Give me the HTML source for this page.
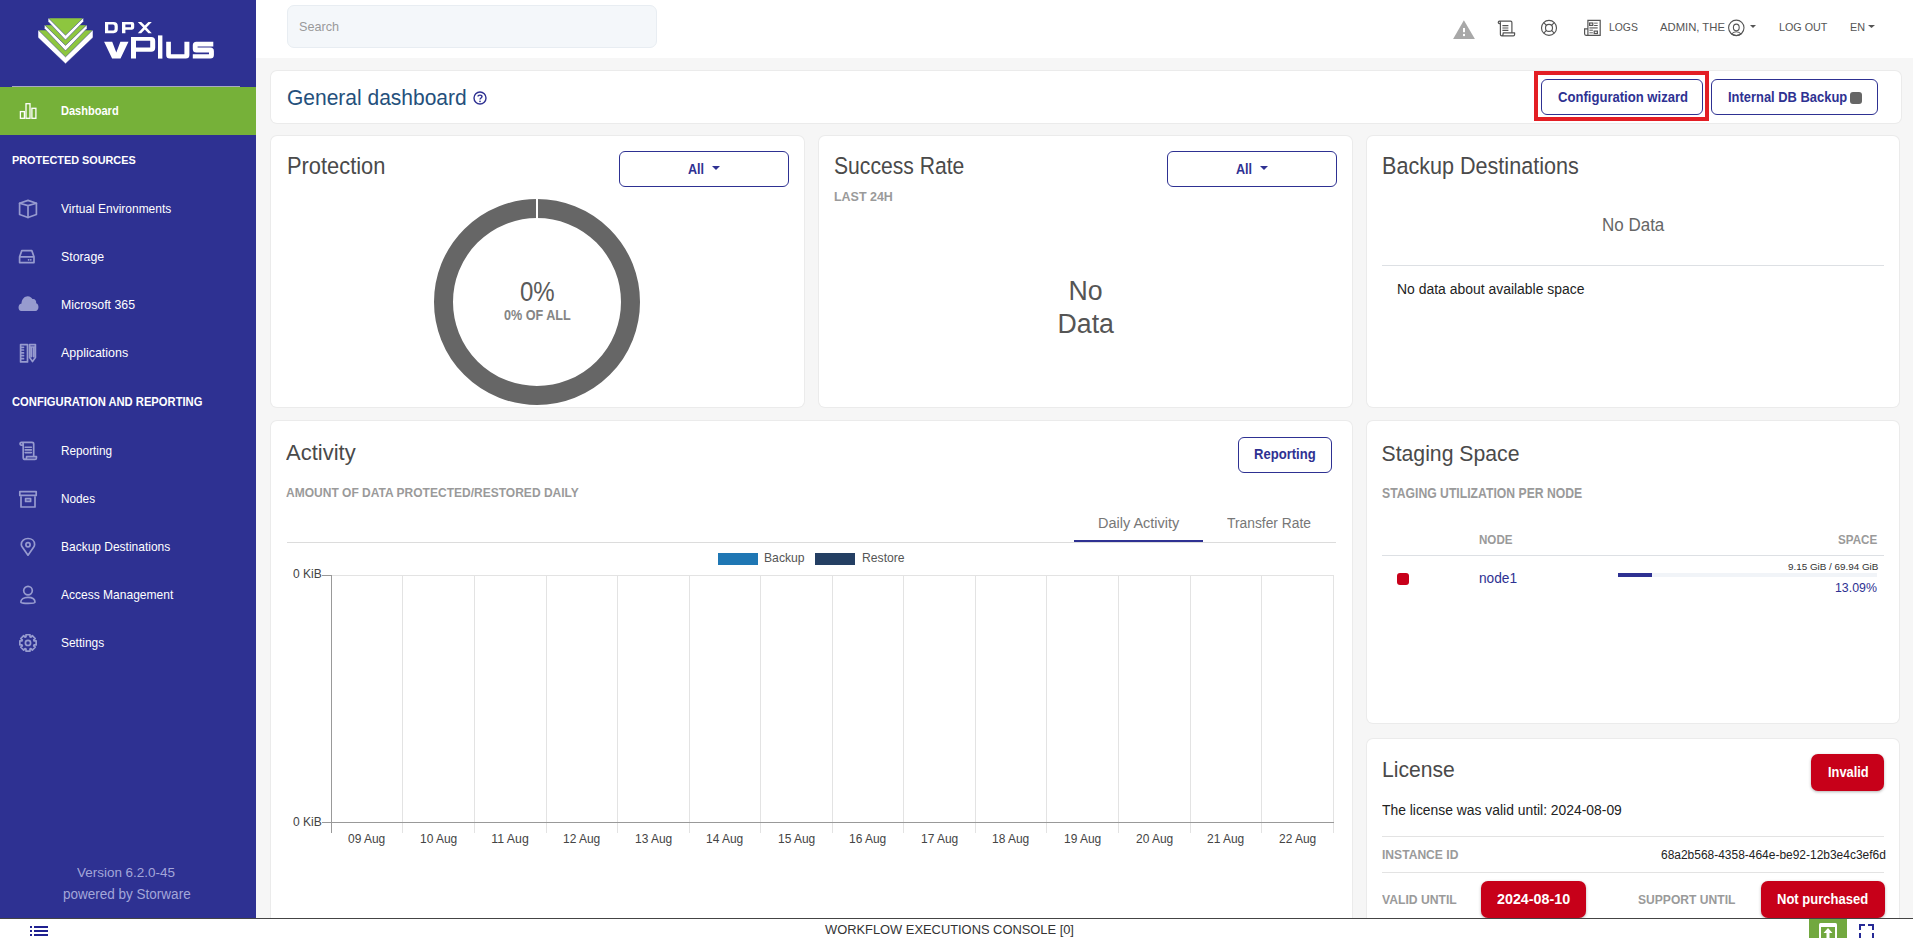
<!DOCTYPE html>
<html><head><meta charset="utf-8"><style>
*{box-sizing:border-box;margin:0;padding:0}
html,body{width:1913px;height:938px;overflow:hidden;background:#f6f6f6;font-family:"Liberation Sans",sans-serif;position:relative}
.a{position:absolute;white-space:nowrap;line-height:1}
</style></head><body>
<div style="position:absolute;left:0px;top:0px;width:256px;height:938px;background:#2e3192"></div>
<div style="position:absolute;left:256px;top:0px;width:1657px;height:58px;background:#fff"></div>
<svg style="position:absolute;left:0px;top:0px" width="256" height="87" viewBox="0 0 256 87">
<g stroke="#2e3192" stroke-width="0.5">
<polygon points="38,30.1 38,37.6 65.5,63.8 93,37.6 93,30.1" fill="#fff"/>
<polygon points="38.3,30.1 92.7,30.1 65.5,56.9" fill="#8dc63f"/>
<polygon points="44.4,24.9 44.4,28.4 65.5,50.8 87,28.4 87,24.9" fill="#fff"/>
<polygon points="44.6,24.9 86.7,24.9 65.5,45.4" fill="#8dc63f"/>
<polygon points="48.1,18 48.1,21.5 65.5,39.9 83.5,21.5 83.5,18" fill="#fff"/>
<polygon points="48.4,18 83.2,18 65.5,35.3" fill="#8dc63f"/>
</g>
<g fill="#fff" fill-rule="evenodd">
<path d="M105,21.9 H113.6 Q117.8,21.9 117.8,26 V29.1 Q117.8,33.2 113.6,33.2 H105 Z M108.2,24.6 V30.5 H113 Q114.6,30.5 114.6,28.9 V26.2 Q114.6,24.6 113,24.6 Z"/>
<path d="M122,21.9 H132 Q134.2,21.9 134.2,24 V27.6 Q134.2,29.7 132,29.7 H125.4 V33.2 H122 Z M125.4,24.4 V27.2 H131 V24.4 Z"/>
<path d="M137.8,21.9 H141.2 L144.8,25.6 L148.4,21.9 H151.8 L146.5,27.55 L151.8,33.2 H148.4 L144.8,29.5 L141.2,33.2 H137.8 L143.1,27.55 Z"/>
<polygon points="104.1,41.7 112.2,41.7 116.3,52.6 120.4,41.7 128.5,41.7 120.5,58.6 112.1,58.6"/>
<path d="M131,37 H151.2 Q155.2,37 155.2,41 V47.7 Q155.2,51.7 151.2,51.7 H136 V58.6 H131 Z M136,40.7 V47.6 H150.2 V40.7 Z"/>
<rect x="158" y="35.4" width="4.4" height="23.2"/>
<path d="M166.2,41.7 H170.9 V54.2 H184.4 V41.7 H189.4 V55 Q189.4,58.6 185.8,58.6 H169.8 Q166.2,58.6 166.2,55 Z"/>
<path d="M196.4,41.7 H213.3 V46.4 H197.6 V47.6 H210.3 Q213.9,47.6 213.9,51.2 V55 Q213.9,58.6 210.3,58.6 H192.8 V54.2 H209 V52.6 H196.4 Q192.8,52.6 192.8,49 V45.3 Q192.8,41.7 196.4,41.7 Z"/>
</g>
</svg>
<div style="position:absolute;left:12px;top:86px;width:228px;height:1px;background:#a9a9c4"></div>
<div style="position:absolute;left:0px;top:87px;width:256px;height:48px;background:#76b139"></div>
<div class="a" style="left:61.0px;top:105.00px;font-size:12.33px;color:#fff;font-weight:bold;transform:scaleX(0.895);transform-origin:0 0;">Dashboard</div>
<div class="a" style="left:12.0px;top:154.00px;font-size:11.78px;color:#fff;font-weight:bold;transform:scaleX(0.923);transform-origin:0 0;">PROTECTED SOURCES</div>
<div class="a" style="left:12.0px;top:396.00px;font-size:12.19px;color:#fff;font-weight:bold;transform:scaleX(0.919);transform-origin:0 0;">CONFIGURATION AND REPORTING</div>
<div class="a" style="left:61.0px;top:203.00px;font-size:12.33px;color:#fff;transform:scaleX(0.971);transform-origin:0 0;">Virtual Environments</div>
<div class="a" style="left:61.0px;top:251.00px;font-size:12.33px;color:#fff;">Storage</div>
<div class="a" style="left:61.0px;top:299.00px;font-size:12.33px;color:#fff;">Microsoft 365</div>
<div class="a" style="left:61.0px;top:347.00px;font-size:12.33px;color:#fff;transform:scaleX(1.010);transform-origin:0 0;">Applications</div>
<div class="a" style="left:61.0px;top:445.00px;font-size:12.33px;color:#fff;transform:scaleX(0.956);transform-origin:0 0;">Reporting</div>
<div class="a" style="left:61.0px;top:493.00px;font-size:12.33px;color:#fff;transform:scaleX(0.956);transform-origin:0 0;">Nodes</div>
<div class="a" style="left:61.0px;top:541.00px;font-size:12.33px;color:#fff;transform:scaleX(0.972);transform-origin:0 0;">Backup Destinations</div>
<div class="a" style="left:61.0px;top:589.00px;font-size:12.33px;color:#fff;transform:scaleX(0.975);transform-origin:0 0;">Access Management</div>
<div class="a" style="left:61.0px;top:637.00px;font-size:12.33px;color:#fff;transform:scaleX(0.968);transform-origin:0 0;">Settings</div>
<div class="a" style="left:77.0px;top:866.00px;font-size:13.01px;color:#a3a6d9;transform:scaleX(1.035);transform-origin:0 0;">Version 6.2.0-45</div>
<div class="a" style="left:62.7px;top:888.00px;font-size:13.97px;color:#a3a6d9;transform:scaleX(0.967);transform-origin:0 0;">powered by Storware</div>
<div style="position:absolute;left:287px;top:5px;width:370px;height:43px;background:#f4f7fa;border:1px solid #e8edf2;border-radius:7px"></div>
<div class="a" style="left:298.5px;top:20.00px;font-size:13.56px;color:#9a9a9a;transform:scaleX(0.933);transform-origin:0 0;">Search</div>
<div class="a" style="left:1608.5px;top:22.00px;font-size:11.51px;color:#555;transform:scaleX(0.904);transform-origin:0 0;">LOGS</div>
<div class="a" style="left:1660.4px;top:22.00px;font-size:11.51px;color:#555;transform:scaleX(0.980);transform-origin:0 0;">ADMIN, THE</div>
<div class="a" style="left:1778.6px;top:22.00px;font-size:11.51px;color:#555;transform:scaleX(0.935);transform-origin:0 0;">LOG OUT</div>
<div class="a" style="left:1849.5px;top:22.00px;font-size:11.51px;color:#555;transform:scaleX(0.939);transform-origin:0 0;">EN</div>
<div style="position:absolute;left:271px;top:71px;width:1630px;height:52px;background:#fff;border-radius:6px;box-shadow:0 0 0 1px #ebebeb"></div>
<div style="position:absolute;left:271px;top:136px;width:533px;height:271px;background:#fff;border-radius:6px;box-shadow:0 0 0 1px #ebebeb"></div>
<div style="position:absolute;left:819px;top:136px;width:533px;height:271px;background:#fff;border-radius:6px;box-shadow:0 0 0 1px #ebebeb"></div>
<div style="position:absolute;left:1367px;top:136px;width:532px;height:271px;background:#fff;border-radius:6px;box-shadow:0 0 0 1px #ebebeb"></div>
<div style="position:absolute;left:271px;top:421px;width:1081px;height:539px;background:#fff;border-radius:6px;box-shadow:0 0 0 1px #ebebeb"></div>
<div style="position:absolute;left:1367px;top:421px;width:532px;height:302px;background:#fff;border-radius:6px;box-shadow:0 0 0 1px #ebebeb"></div>
<div style="position:absolute;left:1367px;top:739px;width:532px;height:221px;background:#fff;border-radius:6px;box-shadow:0 0 0 1px #ebebeb"></div>
<div class="a" style="left:287.0px;top:87.00px;font-size:22.19px;color:#24507c;transform:scaleX(0.946);transform-origin:0 0;">General dashboard</div>
<svg style="position:absolute;left:473px;top:91px" width="14" height="14" viewBox="0 0 14 14"><circle cx="7" cy="7" r="6" fill="none" stroke="#2e3192" stroke-width="1.4"/><path d="M5,5.6 C5,3.6 9,3.6 9,5.6 C9,7 7,7 7,8.6" fill="none" stroke="#2e3192" stroke-width="1.4"/><circle cx="7" cy="10.4" r=".8" fill="#2e3192"/></svg>
<div style="position:absolute;left:1534px;top:71px;width:175px;height:50px;border:4px solid #e31e24"></div>
<div style="position:absolute;left:1541px;top:79px;width:162px;height:36px;border:1px solid #2e3192;border-radius:6px;background:#fff"></div>
<div class="a" style="left:1557.5px;top:90.00px;font-size:14.79px;color:#2e3192;font-weight:bold;transform:scaleX(0.885);transform-origin:0 0;">Configuration wizard</div>
<div style="position:absolute;left:1711px;top:79px;width:167px;height:36px;border:1px solid #2e3192;border-radius:6px;background:#fff"></div>
<div class="a" style="left:1727.5px;top:90.00px;font-size:14.79px;color:#2e3192;font-weight:bold;transform:scaleX(0.874);transform-origin:0 0;">Internal DB Backup</div>
<div style="position:absolute;left:1850px;top:92px;width:12px;height:12px;background:#666;border-radius:3px"></div>
<div class="a" style="left:286.7px;top:155.00px;font-size:23.29px;color:#4a4a4a;transform:scaleX(0.939);transform-origin:0 0;">Protection</div>
<div style="position:absolute;left:619px;top:151px;width:170px;height:36px;border:1px solid #2e3192;border-radius:6px;background:#fff"></div>
<div class="a" style="left:688.0px;top:162.00px;font-size:14.38px;color:#2e3192;font-weight:bold;transform:scaleX(0.876);transform-origin:0 0;">All</div>
<svg style="position:absolute;left:712.0px;top:166px" width="8.0" height="5" viewBox="0 0 8.0 5"><polygon points="0,0 8,0 4,4" fill="#2e3192"/></svg>
<svg style="position:absolute;left:434px;top:199px" width="206" height="206" viewBox="0 0 206 206"><circle cx="103" cy="103" r="93.5" fill="none" stroke="#666" stroke-width="19"/><rect x="102" y="0" width="2" height="21" fill="#fff"/></svg>
<div class="a" style="left:520.0px;top:278.00px;font-size:27.53px;color:#5a5a5a;transform:scaleX(0.873);transform-origin:0 0;">0%</div>
<div class="a" style="left:504.3px;top:308.00px;font-size:14.38px;color:#858585;font-weight:bold;transform:scaleX(0.877);transform-origin:0 0;">0% OF ALL</div>
<div class="a" style="left:834.2px;top:155.00px;font-size:23.29px;color:#4a4a4a;transform:scaleX(0.907);transform-origin:0 0;">Success Rate</div>
<div style="position:absolute;left:1167px;top:151px;width:170px;height:36px;border:1px solid #2e3192;border-radius:6px;background:#fff"></div>
<div class="a" style="left:1236.0px;top:162.00px;font-size:14.38px;color:#2e3192;font-weight:bold;transform:scaleX(0.876);transform-origin:0 0;">All</div>
<svg style="position:absolute;left:1260.0px;top:166px" width="8.0" height="5" viewBox="0 0 8.0 5"><polygon points="0,0 8,0 4,4" fill="#2e3192"/></svg>
<div class="a" style="left:834.2px;top:190.00px;font-size:13.29px;color:#9a9a9a;font-weight:bold;transform:scaleX(0.938);transform-origin:0 0;">LAST 24H</div>
<div class="a" style="left:1068.5px;top:278.00px;font-size:26.71px;color:#555;">No</div>
<div class="a" style="left:1057.5px;top:311.00px;font-size:26.71px;color:#555;">Data</div>
<div class="a" style="left:1382.0px;top:155.00px;font-size:23.29px;color:#4a4a4a;transform:scaleX(0.927);transform-origin:0 0;">Backup Destinations</div>
<div class="a" style="left:1602.0px;top:216.00px;font-size:18.49px;color:#666;transform:scaleX(0.919);transform-origin:0 0;">No Data</div>
<div style="position:absolute;left:1382px;top:265px;width:502px;height:1px;background:#dde0e4"></div>
<div class="a" style="left:1396.8px;top:282.00px;font-size:14.93px;color:#222;transform:scaleX(0.934);transform-origin:0 0;">No data about available space</div>
<div class="a" style="left:286.3px;top:441.00px;font-size:22.88px;color:#4a4a4a;transform:scaleX(0.961);transform-origin:0 0;">Activity</div>
<div class="a" style="left:286.3px;top:486.00px;font-size:13.56px;color:#9a9a9a;font-weight:bold;transform:scaleX(0.887);transform-origin:0 0;">AMOUNT OF DATA PROTECTED/RESTORED DAILY</div>
<div style="position:absolute;left:1238px;top:437px;width:94px;height:36px;border:1px solid #2e3192;border-radius:6px;background:#fff"></div>
<div class="a" style="left:1254.0px;top:446.00px;font-size:15.48px;color:#2e3192;font-weight:bold;transform:scaleX(0.844);transform-origin:0 0;">Reporting</div>
<div class="a" style="left:1098.0px;top:515.00px;font-size:15.07px;color:#777;transform:scaleX(0.962);transform-origin:0 0;">Daily Activity</div>
<div class="a" style="left:1227.3px;top:515.00px;font-size:15.07px;color:#777;transform:scaleX(0.918);transform-origin:0 0;">Transfer Rate</div>
<div style="position:absolute;left:287px;top:542px;width:1049px;height:1px;background:#dcdcdc"></div>
<div style="position:absolute;left:1074px;top:540px;width:129px;height:2px;background:#2e3192"></div>
<div style="position:absolute;left:718px;top:553px;width:40px;height:12px;background:#1f77b4"></div>
<div class="a" style="left:764.0px;top:552.00px;font-size:12.33px;color:#555;transform:scaleX(0.987);transform-origin:0 0;">Backup</div>
<div style="position:absolute;left:815px;top:553px;width:40px;height:12px;background:#243f63"></div>
<div class="a" style="left:861.5px;top:552.00px;font-size:12.33px;color:#555;transform:scaleX(0.987);transform-origin:0 0;">Restore</div>
<svg style="position:absolute;left:320px;top:575px" width="1020" height="260" viewBox="0 0 1020 260"><rect x="11" y="0" width="1003" height="1" fill="#e3e3e3"/><rect x="11" y="0" width="1" height="258" fill="#e3e3e3"/><rect x="82" y="0" width="1" height="258" fill="#e3e3e3"/><rect x="154" y="0" width="1" height="258" fill="#e3e3e3"/><rect x="226" y="0" width="1" height="258" fill="#e3e3e3"/><rect x="297" y="0" width="1" height="258" fill="#e3e3e3"/><rect x="369" y="0" width="1" height="258" fill="#e3e3e3"/><rect x="440" y="0" width="1" height="258" fill="#e3e3e3"/><rect x="512" y="0" width="1" height="258" fill="#e3e3e3"/><rect x="583" y="0" width="1" height="258" fill="#e3e3e3"/><rect x="655" y="0" width="1" height="258" fill="#e3e3e3"/><rect x="726" y="0" width="1" height="258" fill="#e3e3e3"/><rect x="798" y="0" width="1" height="258" fill="#e3e3e3"/><rect x="870" y="0" width="1" height="258" fill="#e3e3e3"/><rect x="941" y="0" width="1" height="258" fill="#e3e3e3"/><rect x="1013" y="0" width="1" height="258" fill="#e3e3e3"/><rect x="11" y="0" width="1" height="258" fill="#999"/><rect x="2" y="247" width="1012" height="1" fill="#999"/><rect x="2" y="0" width="9" height="1" fill="#999"/></svg>
<div class="a" style="left:292.8px;top:568.00px;font-size:12.33px;color:#444;transform:scaleX(0.976);transform-origin:0 0;">0 KiB</div>
<div class="a" style="left:292.8px;top:816.00px;font-size:12.74px;color:#444;transform:scaleX(0.946);transform-origin:0 0;">0 KiB</div>
<div class="a" style="left:348.2px;top:833.00px;font-size:12.33px;color:#444;transform:scaleX(0.971);transform-origin:0 0;">09 Aug</div>
<div class="a" style="left:419.8px;top:833.00px;font-size:12.33px;color:#444;transform:scaleX(0.971);transform-origin:0 0;">10 Aug</div>
<div class="a" style="left:491.3px;top:833.00px;font-size:12.33px;color:#444;">11 Aug</div>
<div class="a" style="left:562.9px;top:833.00px;font-size:12.33px;color:#444;transform:scaleX(0.971);transform-origin:0 0;">12 Aug</div>
<div class="a" style="left:634.5px;top:833.00px;font-size:12.33px;color:#444;transform:scaleX(0.971);transform-origin:0 0;">13 Aug</div>
<div class="a" style="left:706.0px;top:833.00px;font-size:12.33px;color:#444;transform:scaleX(0.971);transform-origin:0 0;">14 Aug</div>
<div class="a" style="left:777.6px;top:833.00px;font-size:12.33px;color:#444;transform:scaleX(0.971);transform-origin:0 0;">15 Aug</div>
<div class="a" style="left:849.2px;top:833.00px;font-size:12.33px;color:#444;transform:scaleX(0.971);transform-origin:0 0;">16 Aug</div>
<div class="a" style="left:920.7px;top:833.00px;font-size:12.33px;color:#444;transform:scaleX(0.971);transform-origin:0 0;">17 Aug</div>
<div class="a" style="left:992.3px;top:833.00px;font-size:12.33px;color:#444;transform:scaleX(0.971);transform-origin:0 0;">18 Aug</div>
<div class="a" style="left:1063.9px;top:833.00px;font-size:12.33px;color:#444;transform:scaleX(0.971);transform-origin:0 0;">19 Aug</div>
<div class="a" style="left:1135.5px;top:833.00px;font-size:12.33px;color:#444;transform:scaleX(0.971);transform-origin:0 0;">20 Aug</div>
<div class="a" style="left:1207.0px;top:833.00px;font-size:12.33px;color:#444;transform:scaleX(0.971);transform-origin:0 0;">21 Aug</div>
<div class="a" style="left:1278.6px;top:833.00px;font-size:12.33px;color:#444;transform:scaleX(0.971);transform-origin:0 0;">22 Aug</div>
<div class="a" style="left:1381.5px;top:443.00px;font-size:21.23px;color:#4a4a4a;">Staging Space</div>
<div class="a" style="left:1381.5px;top:486.00px;font-size:14.38px;color:#9a9a9a;font-weight:bold;transform:scaleX(0.849);transform-origin:0 0;">STAGING UTILIZATION PER NODE</div>
<div class="a" style="left:1478.5px;top:533.00px;font-size:13.29px;color:#9a9a9a;font-weight:bold;transform:scaleX(0.873);transform-origin:0 0;">NODE</div>
<div class="a" style="left:1838.0px;top:533.00px;font-size:13.29px;color:#9a9a9a;font-weight:bold;transform:scaleX(0.876);transform-origin:0 0;">SPACE</div>
<div style="position:absolute;left:1382px;top:555px;width:502px;height:1px;background:#dde0e4"></div>
<div style="position:absolute;left:1397px;top:573px;width:12px;height:12px;background:#c8001a;border-radius:3px"></div>
<div class="a" style="left:1478.5px;top:571.00px;font-size:14.00px;color:#2e3192;transform:scaleX(0.979);transform-origin:0 0;">node1</div>
<div class="a" style="left:1788.0px;top:562.00px;font-size:9.86px;color:#333;">9.15 GiB / 69.94 GiB</div>
<div style="position:absolute;left:1618px;top:573px;width:259px;height:4px;background:#f1f4f8"></div>
<div style="position:absolute;left:1618px;top:573px;width:34px;height:4px;background:#2e3192"></div>
<div class="a" style="left:1835.4px;top:581.00px;font-size:13.70px;color:#2e3192;transform:scaleX(0.902);transform-origin:0 0;">13.09%</div>
<div class="a" style="left:1382.3px;top:759.00px;font-size:22.47px;color:#4a4a4a;transform:scaleX(0.939);transform-origin:0 0;">License</div>
<div style="position:absolute;left:1811px;top:754px;width:73px;height:37px;background:#c70019;border-radius:7px;box-shadow:0 1px 3px rgba(0,0,0,.3)"></div>
<div class="a" style="left:1827.5px;top:764.00px;font-size:15.07px;color:#fff;font-weight:bold;transform:scaleX(0.852);transform-origin:0 0;">Invalid</div>
<div class="a" style="left:1382.3px;top:802.00px;font-size:15.07px;color:#222;transform:scaleX(0.921);transform-origin:0 0;">The license was valid until: 2024-08-09</div>
<div style="position:absolute;left:1382px;top:836px;width:502px;height:1px;background:#e3e3e3"></div>
<div class="a" style="left:1382.0px;top:848.00px;font-size:13.42px;color:#9a9a9a;font-weight:bold;transform:scaleX(0.902);transform-origin:0 0;">INSTANCE ID</div>
<div class="a" style="left:1660.7px;top:848.00px;font-size:13.70px;color:#222;transform:scaleX(0.874);transform-origin:0 0;">68a2b568-4358-464e-be92-12b3e4c3ef6d</div>
<div style="position:absolute;left:1382px;top:872px;width:502px;height:1px;background:#e3e3e3"></div>
<div class="a" style="left:1382.0px;top:893.00px;font-size:13.01px;color:#9a9a9a;font-weight:bold;transform:scaleX(0.936);transform-origin:0 0;">VALID UNTIL</div>
<div style="position:absolute;left:1481px;top:881px;width:105px;height:37px;background:#c70019;border-radius:7px;box-shadow:0 1px 3px rgba(0,0,0,.3)"></div>
<div class="a" style="left:1496.7px;top:892.00px;font-size:14.66px;color:#fff;font-weight:bold;transform:scaleX(0.976);transform-origin:0 0;">2024-08-10</div>
<div class="a" style="left:1638.4px;top:893.00px;font-size:13.01px;color:#9a9a9a;font-weight:bold;transform:scaleX(0.930);transform-origin:0 0;">SUPPORT UNTIL</div>
<div style="position:absolute;left:1761px;top:881px;width:124px;height:37px;background:#c70019;border-radius:7px;box-shadow:0 1px 3px rgba(0,0,0,.3)"></div>
<div class="a" style="left:1777.2px;top:892.00px;font-size:14.66px;color:#fff;font-weight:bold;transform:scaleX(0.888);transform-origin:0 0;">Not purchased</div>
<div style="position:absolute;left:0px;top:918px;width:1913px;height:20px;background:#fff;border-top:1px solid #444"></div>
<div class="a" style="left:825.0px;top:924.00px;font-size:12.88px;color:#333;">WORKFLOW EXECUTIONS CONSOLE [0]</div>
<div style="position:absolute;left:1809px;top:919px;width:38px;height:19px;background:#72a83f"></div>
<svg style="position:absolute;left:18px;top:101px" width="20" height="18" viewBox="0 0 20 18"><g fill="none" stroke="#fff" stroke-width="1.3"><rect x="2.4" y="10.6" width="4" height="6.7"/><rect x="8" y="2.7" width="4" height="14.6"/><rect x="13.9" y="7.3" width="4" height="10"/></g></svg>
<svg style="position:absolute;left:14px;top:194px" width="30" height="30" viewBox="0 0 30 30"><g fill="none" stroke="#979bcf" stroke-width="1.7" stroke-linejoin="round" stroke-linecap="round"><path d="M5.6,9.3 L14,6.4 L22.4,9.3 L22.4,20.5 L14,23.5 L5.6,20.5 Z"/><path d="M5.6,9.3 L14,11.6 L22.4,9.3 M14,11.6 L14,23.5"/></g></svg>
<svg style="position:absolute;left:14px;top:244px" width="30" height="30" viewBox="0 0 30 30"><g fill="none" stroke="#979bcf" stroke-width="1.7" stroke-linejoin="round" stroke-linecap="round"><path d="M7.8,6.6 L17.8,6.6 L20,12.8 L20,18.6 L5.6,18.6 L5.6,12.8 Z M5.6,12.8 L20,12.8"/></g><circle cx="14.6" cy="15.8" r=".9" fill="#979bcf"/><circle cx="16.8" cy="15.8" r=".9" fill="#979bcf"/></svg>
<svg style="position:absolute;left:14px;top:290px" width="30" height="30" viewBox="0 0 30 30"><path d="M7.3,20.9 C3.6,20.9 3.6,13.8 7.5,13.4 C7.6,9 10.8,6.2 13.7,6.2 C16.2,6.2 17.6,7.6 18.4,9.1 C20.6,8.4 22.6,10.5 22.2,13.2 C25.4,14 25.3,20.9 21.5,20.9 Z" fill="#979bcf"/></svg>
<svg style="position:absolute;left:14px;top:338px" width="30" height="30" viewBox="0 0 30 30"><g fill="none" stroke="#979bcf" stroke-width="1.7" stroke-linejoin="round" stroke-linecap="round" stroke-width="1.4"><rect x="6.6" y="6.6" width="6.9" height="17.3"/><path d="M7,9.3 H9.5 M7,12 H9.5 M7,14.9 H9.5 M7,17.7 H9.5 M7,20.7 H9.5"/><path d="M15.6,6.6 H21.4 V19.6 L18.5,23.6 L15.6,19.6 Z M15.6,9 H21.4 M17.4,10 V18.6 M19.6,10 V18.6"/></g></svg>
<svg style="position:absolute;left:14px;top:436px" width="30" height="30" viewBox="0 0 30 30"><g fill="none" stroke="#979bcf" stroke-width="1.7" stroke-linejoin="round" stroke-linecap="round" stroke-width="1.5"><path d="M9.2,8 C9.2,6.6 8.4,6.4 7.4,6.4 C5.6,6.4 5.6,9.2 7.4,9.2 L9.2,9.2 M7.4,6.4 H18 C19.1,6.4 19.7,7 19.7,8 V20.6 M9.2,8 V21.4 C9.2,23.2 10.6,23.4 11.3,23.4 C12.3,23.4 12.6,22 12.6,20.6 H22.4 V22 C22.4,23 21.8,23.4 21,23.4 H11.3"/><path d="M11.2,11.2 H17.4 M11.2,13.9 H17.4 M11.2,16.6 H17.4" stroke-width="1.6"/></g></svg>
<svg style="position:absolute;left:14px;top:484px" width="30" height="30" viewBox="0 0 30 30"><g fill="none" stroke="#979bcf" stroke-width="1.7" stroke-linejoin="round" stroke-linecap="round" stroke-width="1.5" stroke-linejoin="miter" stroke-linecap="butt"><rect x="5.8" y="7.6" width="16.4" height="3.8"/><path d="M7,12.9 V23 H21 V12.9"/><rect x="11.6" y="14.6" width="5" height="2.8"/></g></svg>
<svg style="position:absolute;left:14px;top:532px" width="30" height="30" viewBox="0 0 30 30"><g fill="none" stroke="#979bcf" stroke-width="1.7" stroke-linejoin="round" stroke-linecap="round" stroke-width="1.5"><path d="M14,23.2 L8.6,15.6 C7.6,14.2 7.3,13.4 7.3,12.4 C7.3,8.8 10.3,6.5 14,6.5 C17.7,6.5 20.6,8.8 20.6,12.4 C20.6,13.4 20.3,14.2 19.4,15.6 Z"/><circle cx="14" cy="12.8" r="2.1"/></g></svg>
<svg style="position:absolute;left:14px;top:580px" width="30" height="30" viewBox="0 0 30 30"><g fill="none" stroke="#979bcf" stroke-width="1.7" stroke-linejoin="round" stroke-linecap="round" stroke-width="1.5"><circle cx="14" cy="10.6" r="4.3"/><path d="M6.8,22.3 C6.8,19.4 9.6,17.3 14,17.3 C18.4,17.3 21,19.4 21,22.3 C21,23.2 17.5,23.4 14,23.4 C10.5,23.4 6.8,23.2 6.8,22.3 Z"/></g></svg>
<svg style="position:absolute;left:14px;top:628px" width="30" height="30" viewBox="0 0 30 30"><g fill="none" stroke="#979bcf" stroke-width="1.7" stroke-linejoin="round" stroke-linecap="round" stroke-width="1.5"><polygon points="11.97,6.75 16.03,6.75 15.98,8.81 16.91,9.20 18.33,7.70 21.20,10.57 19.70,11.99 20.09,12.92 22.15,12.87 22.15,16.93 20.09,16.88 19.70,17.81 21.20,19.23 18.33,22.10 16.91,20.60 15.98,20.99 16.03,23.05 11.97,23.05 12.02,20.99 11.09,20.60 9.67,22.10 6.80,19.23 8.30,17.81 7.91,16.88 5.85,16.93 5.85,12.87 7.91,12.92 8.30,11.99 6.80,10.57 9.67,7.70 11.09,9.20 12.02,8.81"/><circle cx="14" cy="14.9" r="2.6"/></g></svg>
<svg style="position:absolute;left:1452px;top:19px" width="25" height="21" viewBox="0 0 25 21"><polygon points="11.9,1.2 22.9,19.9 1.1,19.9" fill="#a8a8a8"/><rect x="11" y="9" width="2" height="4.2" fill="#fff"/><rect x="11" y="14.9" width="2" height="2.2" fill="#fff"/></svg>
<svg style="position:absolute;left:1496px;top:18px" width="20" height="20" viewBox="0 0 20 20"><g fill="none" stroke="#555" stroke-width="1.2" stroke-linejoin="round"><path d="M4.4,4.8 C4.4,3.4 3.9,3.1 3.3,3.1 C2,3.1 1.9,5.6 3.3,5.6 L4.4,5.6 M3.3,3.1 H14.6 C15.3,3.1 15.9,3.6 15.9,4.4 V14.8 M4.4,4.8 V16.4 C4.4,17.5 5.1,17.8 5.8,17.8 C6.8,17.8 7.2,16.8 7.2,14.8 H18.6 V16.4 C18.6,17.2 18.2,17.8 17.3,17.8 H5.8"/><path d="M6.4,7.6 H12.4 M6.4,10 H12.4 M6.4,12.4 H12.4" stroke-width="1.1"/></g></svg>
<svg style="position:absolute;left:1539px;top:18px" width="20" height="20" viewBox="0 0 20 20"><g fill="none" stroke="#555" stroke-width="1.15"><circle cx="10" cy="9.9" r="7.5"/><circle cx="10" cy="9.9" r="3.5"/><path d="M4.7,4.6 L7.5,7.4 M15.3,4.6 L12.5,7.4 M4.7,15.2 L7.5,12.4 M15.3,15.2 L12.5,12.4"/></g></svg>
<svg style="position:absolute;left:1582px;top:18px" width="20" height="20" viewBox="0 0 20 20"><g fill="none" stroke="#555" stroke-width="1.2"><path d="M5.9,17.3 V2.3 H18.2 V17.3 H4 C2.9,17.3 2.6,16.6 2.6,15.8 V10.8 H5.9"/><rect x="7.6" y="5" width="3.2" height="2.4"/><rect x="12.2" y="13.1" width="3.2" height="2.4"/></g><g fill="#555"><rect x="12.1" y="4.6" width="3.6" height="1.1" opacity=".8"/><rect x="12.1" y="7" width="3.6" height="1"/><rect x="7.4" y="9.2" width="8.3" height="1.4" opacity=".8"/><rect x="7.4" y="11.7" width="3.5" height="1"/><rect x="7.4" y="14.2" width="3.5" height="1.1" opacity=".8"/></g></svg>
<svg style="position:absolute;left:1726px;top:18px" width="20" height="20" viewBox="0 0 20 20"><g fill="none" stroke="#555" stroke-width="1.1"><circle cx="10.3" cy="9.8" r="7.7"/><ellipse cx="10.3" cy="9.4" rx="2.9" ry="3.3"/><path d="M5.6,16 C7,14.2 8.6,13.7 10.3,13.7 C12,13.7 13.6,14.2 15,16 C13.6,17.2 12,17.6 10.3,17.6 C8.6,17.6 7,17.2 5.6,16 Z"/></g></svg>
<svg style="position:absolute;left:1750px;top:25px" width="7" height="4" viewBox="0 0 7 4"><polygon points="0,0 6,0 3,3" fill="#555"/></svg>
<svg style="position:absolute;left:1868px;top:25px" width="8" height="4" viewBox="0 0 8 4"><polygon points="0,0 7,0 3.5,3" fill="#555"/></svg>
<svg style="position:absolute;left:30px;top:926px" width="19" height="11" viewBox="0 0 19 11"><g fill="#1f2090"><rect x="0" y="0" width="2" height="2"/><rect x="0" y="4" width="2" height="2"/><rect x="0" y="8" width="2" height="2"/><rect x="4" y="0" width="14" height="2"/><rect x="4" y="4" width="14" height="2"/><rect x="4" y="8" width="14" height="2"/></g></svg>
<svg style="position:absolute;left:1819px;top:923px" width="19" height="15" viewBox="0 0 19 15"><rect x="0" y="0" width="18" height="17" rx="1.5" fill="#fff"/><rect x="2" y="4" width="14" height="13" fill="#72a83f"/><polygon points="9,5 13.5,10 10.5,10 10.5,15 7.5,15 7.5,10 4.5,10" fill="#fff"/></svg>
<svg style="position:absolute;left:1858px;top:923px" width="17" height="15" viewBox="0 0 17 15"><g fill="none" stroke="#262a96" stroke-width="2" stroke-linecap="square"><path d="M2,6 V2 H6 M11,2 H15 V6 M15,11 V15 M2,11 V15"/></g></svg>
</body></html>
